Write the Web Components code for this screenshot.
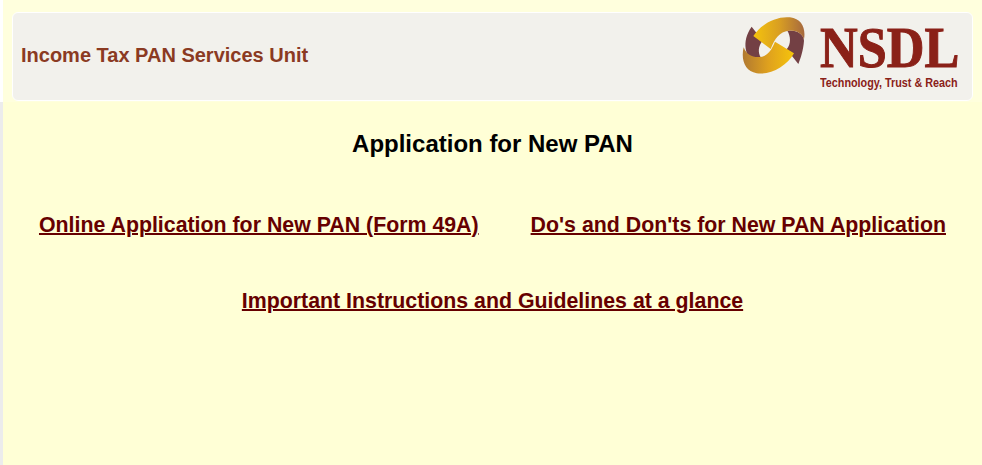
<!DOCTYPE html>
<html lang="en">
<head>
<meta charset="utf-8">
<title>Application for New PAN</title>
<style>
    html, body { margin: 0; height: 100%; }
    body { background: #ffffd6; font-family: "Liberation Sans", Arial, sans-serif; overflow: hidden; }
</style>
</head>
<body>
<pan-page>
    <pan-header title-text="Income Tax PAN Services Unit"></pan-header>
    <pan-content></pan-content>
</pan-page>

<script>
class PanPage extends HTMLElement {
    constructor() {
        super();
        this.attachShadow({ mode: 'open' });
        this.shadowRoot.innerHTML = `
            <style>
                :host {
                    display: block;
                    height: 465px;
                    box-sizing: border-box;
                    border-left: 3px solid #ececec;
                    background: #ffffd6;
                }
            </style>
            <slot></slot>
        `;
    }
}

class NsdlLogo extends HTMLElement {
    constructor() {
        super();
        this.attachShadow({ mode: 'open' });
        this.shadowRoot.innerHTML = `
            <style>
                :host {
                    display: flex;
                    align-items: flex-start;
                    gap: 13.33px;
                    align-self: flex-start;
                    margin-top: 2px;
                }
                svg { display: block; width: 66.67px; height: 60px; flex: none; }
                .words { display: flex; flex-direction: column; width: 140px; color: #8a2118; padding-top: 11.4px; }
                .name {
                    font: bold 58px/44px "Liberation Serif", serif;
                    height: 44px;
                    transform: scaleX(.9);
                    transform-origin: left top;
                    white-space: nowrap;
                    -webkit-text-stroke: 1px #8a2118;
                }
                .tag {
                    font: bold 12px/14px "Liberation Sans", sans-serif;
                    white-space: nowrap;
                    transform: scaleX(.9);
                    transform-origin: left top;
                    margin-top: 5.6px;
                }
            </style>
            <svg viewBox="30 45 200 180" aria-hidden="true">
                <defs>
                    <linearGradient id="up" gradientUnits="userSpaceOnUse" x1="70" y1="100" x2="225" y2="100">
                        <stop offset="0" stop-color="#f5c30c"/>
                        <stop offset=".5" stop-color="#d99f22"/>
                        <stop offset="1" stop-color="#a5683f"/>
                    </linearGradient>
                    <linearGradient id="down" gradientUnits="userSpaceOnUse" x1="190" y1="170" x2="40" y2="170">
                        <stop offset="0" stop-color="#f5c30c"/>
                        <stop offset=".5" stop-color="#dfa11e"/>
                        <stop offset="1" stop-color="#b27a30"/>
                    </linearGradient>
                </defs>
                <path fill="#734044" d="M65 80 L98 122 C84 138 84 158 92 172 L72 190 C48 172 32 125 65 80Z"/>
                <path fill="#734044" d="M172 92 C195 88 222 100 222 122 C220 150 212 175 205 192 L170 148 C184 132 182 108 172 92Z"/>
                <path fill="url(#up)" d="M70 108 C95 70 140 48 180 52 C215 56 228 85 222 118 C216 100 198 90 175 92 C150 95 134 115 122 147Z"/>
                <path fill="url(#down)" d="M192 160 C170 200 120 226 80 220 C45 214 32 180 41 142 C50 165 68 173 90 171 C112 169 125 150 135 125Z"/>
            </svg>
            <div class="words">
                <div class="name">NSDL</div>
                <div class="tag">Technology, Trust &amp; Reach</div>
            </div>
        `;
    }
}

class PanHeader extends HTMLElement {
    constructor() {
        super();
        this.attachShadow({ mode: 'open' });
        this.shadowRoot.innerHTML = `
            <style>
                :host {
                    display: block;
                    box-sizing: border-box;
                    height: 102px;
                    padding: 12px 9px 0 9px;
                    background: #ffffdd;
                    border-left: 3px solid #fff;
                    margin-left: -3px;
                }
                .panel {
                    display: flex;
                    align-items: center;
                    justify-content: space-between;
                    box-sizing: border-box;
                    height: 89px;
                    background: #f2f1ec;
                    border: 1px solid #fff;
                    border-radius: 6px;
                    padding: 0 12px 4px 8px;
                }
                h1 {
                    margin: 0;
                    font: bold 20px/24px "Liberation Sans", Arial, sans-serif;
                    color: #8b3a22;
                }
            </style>
            <div class="panel">
                <h1></h1>
                <nsdl-logo></nsdl-logo>
            </div>
        `;
    }

    connectedCallback() {
        this.shadowRoot.querySelector('h1').textContent = this.getAttribute('title-text');
    }
}

class PanLink extends HTMLElement {
    constructor() {
        super();
        this.attachShadow({ mode: 'open' });
        this.shadowRoot.innerHTML = `
            <style>
                :host { display: inline-block; }
                a {
                    font: bold 21.33px/24px "Liberation Sans", Arial, sans-serif;
                    color: #660000;
                    text-decoration: underline;
                    text-decoration-thickness: 2px;
                }
            </style>
            <a href="#"><slot></slot></a>
        `;
    }
}

class PanContent extends HTMLElement {
    constructor() {
        super();
        this.attachShadow({ mode: 'open' });
        this.shadowRoot.innerHTML = `
            <style>
                :host {
                    display: block;
                    padding: 28px 0 0 3px;
                    margin-left: -3px;
                    text-align: center;
                }
                h2 {
                    margin: 0;
                    font: bold 24px/28px "Liberation Sans", Arial, sans-serif;
                    color: #000;
                }
                .row { display: flex; justify-content: center; gap: 52px; margin-top: 55px; }
                .single { margin-top: 52px; }
            </style>
            <h2>Application for New PAN</h2>
            <div class="row">
                <pan-link>Online Application for New PAN (Form 49A)</pan-link>
                <pan-link>Do's and Don'ts for New PAN Application</pan-link>
            </div>
            <div class="row single">
                <pan-link>Important Instructions and Guidelines at a glance</pan-link>
            </div>
        `;
    }
}

customElements.define('nsdl-logo', NsdlLogo);
customElements.define('pan-header', PanHeader);
customElements.define('pan-link', PanLink);
customElements.define('pan-content', PanContent);
customElements.define('pan-page', PanPage);
</script>
</body>
</html>
